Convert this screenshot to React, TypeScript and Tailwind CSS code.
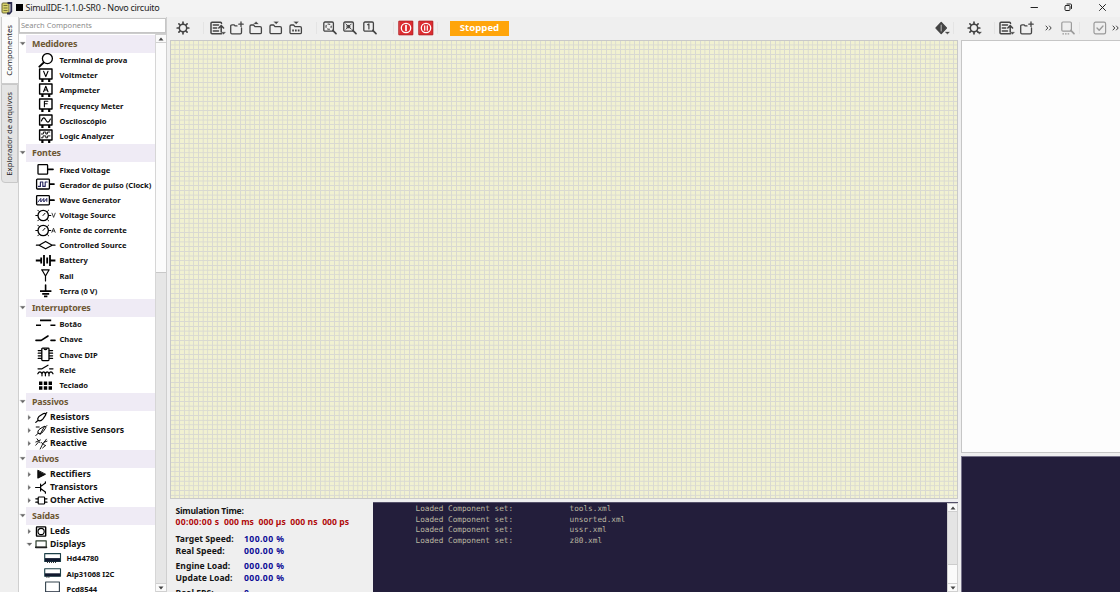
import React from "react";

type IconProps = { children: React.ReactNode; className?: string; w?: number; h?: number };

function Ico({ children, className = "", w = 16, h = 16 }: IconProps) {
  return (
    <svg
      width={w}
      height={h}
      viewBox={`0 0 ${w} ${h}`}
      fill="none"
      stroke="currentColor"
      strokeWidth="1.3"
      strokeLinecap="round"
      strokeLinejoin="round"
      className={`shrink-0 ${className}`}
    >
      {children}
    </svg>
  );
}

/* ---------- component tree icons (22 x 15) ---------- */

const meterBody = (
  <>
    <rect x="4.6" y="1" width="12.4" height="10" strokeWidth="1.4" />
    <path d="M7.4 11v3M14.2 11v3" strokeWidth="2.2" strokeLinecap="butt" />
  </>
);

const knob = (
  <>
    <circle cx="8.2" cy="7.5" r="5.2" strokeWidth="1.3" />
    <path d="M8 7.5l2-2.2M.8 7.5h1.8M13.8 7.5h2M2.8 2.2l1 1M13.6 2.2l-1 1M2.8 12.8l1-1M13.6 12.8l-1-1" strokeWidth="1" />
  </>
);

const icons: Record<string, React.ReactNode> = {
  probe: (
    <>
      <circle cx="12.4" cy="5.6" r="5" strokeWidth="1.3" />
      <path d="M8.6 9.6L4.4 13.6" strokeWidth="2" />
    </>
  ),
  volt: <>{meterBody}<path d="M8.6 3.2l2.2 5.4L13 3.2" strokeWidth="1.1" /></>,
  amp: <>{meterBody}<path d="M8.6 8.8l2.2-5.6L13 8.8M9.6 7h2.6" strokeWidth="1.1" /></>,
  freq: <>{meterBody}<path d="M9.4 8.8V3.2h3.4M9.4 5.8h2.8" strokeWidth="1.1" /></>,
  scope: <>{meterBody}<path d="M6.4 7c1.4-4 3-4 4.4-1s3 3 4.6-1" strokeWidth="1.1" /></>,
  logic: <>{meterBody}<path d="M6.4 5h2V3h2.4v2h1.6V3h2.4M6.4 8.8h1.6V6.9h2.8v1.9h1.8V6.9h2.4" strokeWidth="0.9" /></>,
  fixed: <><rect x="3" y="2.6" width="9.6" height="9.6" rx="0.8" /><path d="M13 7.3h5" strokeWidth="1.7" /></>,
  clock: <><rect x="1.6" y="2.2" width="12.8" height="9.8" rx="0.8" /><path d="M15 7.1h4" strokeWidth="1.7" /><path d="M3.4 9.4h2V5h2.4v4.4h2.4V5h2" stroke="#22225c" strokeWidth="1.1" /></>,
  wave: <><rect x="1.6" y="2.6" width="12.8" height="9.2" rx="0.8" /><path d="M15 7.2h4" strokeWidth="1.7" /><path d="M3 9l2.8-3.6V9l3-3.6V9l3-3.6v3" stroke="#22225c" strokeWidth="1" /></>,
  vsrc: <>{knob}<path d="M17 5.2l1.6 4.2 1.6-4.2" strokeWidth="0.7" /></>,
  asrc: <>{knob}<path d="M16.8 9.4l1.7-4.2 1.7 4.2M17.4 8h2.2" strokeWidth="0.7" /></>,
  ctrl: <path d="M1.4 7.2H4l6.600-3.800 6.600 3.800h2.800M4 7.200l6.600 3.600 6.600-3.600" strokeWidth="1.2" />,
  batt: <path d="M.8 7.5h5M15.4 7.5h5M6.2 4.6v5.8M9 2v11M12.2 4.6v5.8M15 2v11" strokeWidth="1.8" strokeLinecap="butt" />,
  rail: <path d="M6.6 1.8h7.6M7 2l3.5 6L14 2M10.5 8v5" strokeWidth="1.2" />,
  gnd: <><path d="M10.600 1v6" strokeWidth="1.6" /><path d="M5 7.2h11.4M7.2 9.8h7M9 12.4h3.4" strokeWidth="1.7" strokeLinecap="butt" /></>,
  button: <path d="M5 3.4h11.2M1 8.2h5M15.4 8.2h5" strokeWidth="1.6" strokeLinecap="butt" />,
  sw: <path d="M1 8.4h5.2L13 4M16 8.4h4" strokeWidth="1.6" />,
  dip: (
    <>
      <rect x="6.8" y="1.2" width="7.2" height="12.4" rx="0.8" />
      <path d="M3.2 3.6h3.2M3.2 6.2h3.2M3.2 8.8h3.2M3.2 11.4h3.2M14.4 3.6h3.2M14.4 6.2h3.2M14.4 8.8h3.2M14.4 11.4h3.2M9 1.8c.6 1.2 2.4 1.2 3 0" strokeWidth="1.2" />
    </>
  ),
  relay: <path d="M3 5.8h4L13 2.2M14.6 5.8H18M2.8 10.8c1.2-2.6 3-2.6 4.2 0M7 10.8c.8-2.6 2.4-2.6 3.4 0M10.4 10.8c1-2.6 2.6-2.6 3.6 0M14 10.8c1-2.6 2.8-2.6 4 0M7 10.8v2M10.4 10.8v2M14 10.8v2" strokeWidth="1.2" />,
  keypad: <path d="M4 5.2h3.4M8.8 5.2h3.4M13.6 5.2H17M4 10h3.4M8.8 10h3.4M13.6 10H17" strokeWidth="3.4" strokeLinecap="butt" />,
  lcd: (
    <>
      <rect x="1.7" y="2.6" width="15.8" height="7.8" strokeWidth="1.1" fill="#fff" stroke="#1d4048" />
      <path d="M2 8.8h15" stroke="#10182e" strokeWidth="3.4" strokeLinecap="butt" />
      <path d="M4 11.4h9" stroke="#222" strokeWidth="1" strokeDasharray="1 1" strokeLinecap="butt" />
    </>
  ),
  lcd2: (
    <>
      <rect x="1.7" y="2.8" width="15.8" height="7.4" strokeWidth="1.1" fill="#fff" stroke="#1d4048" />
      <path d="M2 8.8h15" stroke="#10182e" strokeWidth="3" strokeLinecap="butt" />
      <path d="M3.4 11.2h4" stroke="#222" strokeWidth="1" strokeDasharray="1 1" strokeLinecap="butt" />
    </>
  ),
  pcd: (
    <>
      <rect x="2.6" y="1" width="13.8" height="10" strokeWidth="1.1" stroke="#33424d" />
      <path d="M3 11.2h13" strokeWidth="1.4" stroke="#10182e" />
    </>
  ),
  /* 13 x 13 group icons */
  resistor: <path d="M.8 11.4l2.4-2.2M3.2 9.2c-1.2-1.2.2-3.4 1.8-4.4l3.6-2.2c1.8-.8 2.8.4 1.8 1.8L8 7.8c-1.4 1.6-3.6 2.4-4.8 1.4zM10.4 3l1.4-1.4" strokeWidth="1.2" />,
  sensor: <path d="M.8 11.6l2.4-2.4M3.2 9.2c-1.2-1.2.2-3.4 1.8-4.4l3.6-2.2c1.8-.8 2.8.4 1.8 1.8L8 7.8c-1.4 1.6-3.6 2.4-4.8 1.4zM1.2 3h3M10.4 3l1.4-1.4M5 10.6l4.4-8" strokeWidth="1" />,
  reactive: <path d="M.8 5l4.6-2M2 1.8l3 4M.8 8.2l2.6-3M5.2 12l2.2-4.4M7.6 7.2l3.8-5M6.4 5.6l3.6 2.8M7.6 11l3-2.6M9 5.2l3-1" strokeWidth="0.9" />,
  diode: <path d="M2.8 2.6v7.6l7.4-3.8z" fill="#111" strokeWidth="0.9" />,
  transistor: <path d="M.6 6.5h4.800M5.6 3v7M5.6 5.6L10 2.2h.4M5.600 7.600l4.400 3.200h.4M10.400 2.200V.8M10.400 10.800v1.400" strokeWidth="1.2" />,
  chip: <><rect x="3.2" y="3" width="6.4" height="7" rx="0.8" strokeWidth="1.2" /><path d="M.8 4.8h2.200M.8 8.200h2.200M9.800 4.800H12M9.800 8.200H12" strokeWidth="1.2" /></>,
  led: <><rect x="1.5" y="1.9" width="9.2" height="9.2" rx=".5" strokeWidth="1.4" /><circle cx="6.1" cy="6.5" r="3.1" strokeWidth="1.1" /></>,
  display: <><rect x="1" y="2.8" width="10.2" height="6.6" stroke="#2f3f2f" strokeWidth="1.2" /><path d="M.8 9.3h10.600" strokeWidth="1.800" stroke="#222" /></>,
};

/* ---------- component tree ---------- */

function Header({ label }: { label: string }) {
  return (
    <div className="flex h-[18.4px] shrink-0 items-center">
      <Ico w={7} h={6} className="text-[#666]">
        <path d="M1.2 1.2h5L3.7 4z" fill="currentColor" strokeWidth=".2" />
      </Ico>
      <div className="flex h-full flex-1 items-center bg-[#efebf5] pt-px pl-[6px] text-[8.9px] font-bold tracking-[-0.15px] text-[#6d5733]">{label}</div>
    </div>
  );
}

function Item({ icon, label, deep = false }: { icon: string; label: string; deep?: boolean }) {
  return (
    <div className={`flex h-[15.17px] shrink-0 items-center ${deep ? "pl-[24px]" : "pl-[16px]"}`}>
      <Ico w={22} h={15}>{icons[icon]}</Ico>
      <span className={`pt-px text-[7.6px] font-bold tracking-[-0.02px] text-[#111] ${deep ? "pl-[1.5px]" : "pl-[2.5px]"}`}>{label}</span>
    </div>
  );
}

function Group({ icon, label, open = false }: { icon: string; label: string; open?: boolean }) {
  return (
    <div className="flex h-[12.9px] shrink-0 items-center pl-[7px]">
      <Ico w={7} h={7} className="text-[#666]">
        {open ? (
          <path d="M1 2h5L3.500 4.800z" fill="currentColor" strokeWidth=".2" />
        ) : (
          <path d="M2.200 1.200v4.600l2.400-2.300z" fill="currentColor" strokeWidth=".2" />
        )}
      </Ico>
      <Ico w={13} h={13} className="ml-[2px]">{icons[icon]}</Ico>
      <span className="pl-[2px] text-[8.65px] font-bold text-[#111]">{label}</span>
    </div>
  );
}

function ScrollArrow({ down = false }: { down?: boolean }) {
  return (
    <div className="flex h-[9px] shrink-0 items-center justify-center border-y border-[#d0d0d0] bg-[#fafafa]">
      <svg width="6" height="4" viewBox="0 0 6 4" fill="#444">
        <path d={down ? "M.5.500h5L3 3.500z" : "M.5 3.500h5L3 .5z"} />
      </svg>
    </div>
  );
}

function Tree() {
  return (
    <div className="flex min-h-0 flex-1 border-t border-[#ccc] bg-white">
      <div className="flex min-w-0 flex-1 flex-col overflow-hidden pt-[0.5px] whitespace-nowrap">
        <Header label="Medidores" />
        <Item icon="probe" label="Terminal de prova" />
        <Item icon="volt" label="Voltmeter" />
        <Item icon="amp" label="Ampmeter" />
        <Item icon="freq" label="Frequency Meter" />
        <Item icon="scope" label="Osciloscópio" />
        <Item icon="logic" label="Logic Analyzer" />
        <Header label="Fontes" />
        <Item icon="fixed" label="Fixed Voltage" />
        <Item icon="clock" label="Gerador de pulso (Clock)" />
        <Item icon="wave" label="Wave Generator" />
        <Item icon="vsrc" label="Voltage Source" />
        <Item icon="asrc" label="Fonte de corrente" />
        <Item icon="ctrl" label="Controlled Source" />
        <Item icon="batt" label="Battery" />
        <Item icon="rail" label="Rail" />
        <Item icon="gnd" label="Terra (0 V)" />
        <Header label="Interruptores" />
        <Item icon="button" label="Botão" />
        <Item icon="sw" label="Chave" />
        <Item icon="dip" label="Chave DIP" />
        <Item icon="relay" label="Relé" />
        <Item icon="keypad" label="Teclado" />
        <Header label="Passivos" />
        <Group icon="resistor" label="Resistors" />
        <Group icon="sensor" label="Resistive Sensors" />
        <Group icon="reactive" label="Reactive" />
        <Header label="Ativos" />
        <Group icon="diode" label="Rectifiers" />
        <Group icon="transistor" label="Transistors" />
        <Group icon="chip" label="Other Active" />
        <Header label="Saídas" />
        <Group icon="led" label="Leds" />
        <Group icon="display" label="Displays" open />
        <Item icon="lcd" label="Hd44780" deep />
        <Item icon="lcd2" label="Aip31068 I2C" deep />
        <Item icon="pcd" label="Pcd8544" deep />
      </div>
      <div className="flex w-[11px] shrink-0 flex-col border-l border-[#d6d6d6] bg-[#e6e6e6]">
        <ScrollArrow />
        <div className="h-[230px] border-b border-[#c8c8c8] bg-[#fbfbfb]" />
        <div className="flex-1" />
        <ScrollArrow down />
      </div>
    </div>
  );
}

/* ---------- toolbar ---------- */

const Cell = ({ children, className = "" }: { children: React.ReactNode; className?: string }) => (
  <div className={`flex h-4 w-5 shrink-0 items-center justify-center ${className}`}>{children}</div>
);

const Sep = ({ className = "" }: { className?: string }) => <div className={`h-3 w-px shrink-0 bg-[#e4e4e4] ${className}`} />;

const Gear = ({ menu = false }: { menu?: boolean }) => (
  <Ico>
    <circle cx="8" cy="8" r="3.7" strokeWidth="1.5" />
    <path d="M8 2.2v1.6M8 12.2v1.6M2.2 8h1.6M12.2 8h1.6M3.9 3.9l1.1 1.1M11 11l1.1 1.1M3.9 12.1L5 11M11 5l1.1-1.1" strokeWidth="1.7" />
    {menu && <path d="M11.5 12h4l-2 2z" fill="currentColor" strokeWidth=".3" />}
  </Ico>
);

const ListIcon = () => (
  <Ico w={17}>
    <path d="M12.5 3.6V3.2c0-.6-.4-1-1-1H3c-.6 0-1 .4-1 1v9.6c0 .6.4 1 1 1h9.5M4.3 5h5.2M4.3 8h3.4M4.3 11h5.2" strokeWidth="1.5" />
    <path d="M12.2 12V5.8M9.8 8l2.4-2.4L14.6 8" strokeWidth="1.5" />
    <path d="M12.5 12.2h4l-2 2z" fill="currentColor" strokeWidth=".3" />
  </Ico>
);

const FolderNew = () => (
  <Ico>
    <path d="M8 5.9H6L5.200 4.900H3c-.8 0-1.300.5-1.300 1.200v6.500c0 .8.500 1.200 1.300 1.200h8.200c.8 0 1.300-.4 1.300-1.200V8" />
    <path d="M12 2v4.4M9.8 4.2h4.4" />
  </Ico>
);

const Folder = ({ kind }: { kind: "up" | "down" | "dots" }) => (
  <Ico>
    <path d="M3.200 5h2.400l1.400 1.600h5c.9 0 1.400.5 1.400 1.300v4.500c0 .8-.5 1.300-1.400 1.300H3.400c-.9 0-1.400-.5-1.400-1.300V6.300C2 5.500 2.400 5 3.200 5z" />
    <path d={kind === "up" ? "M5.800 4h4.600L8.100 1.800z" : "M5.900 1.700h4.600L8.200 3.900z"} fill="currentColor" strokeWidth=".2" />
    {kind === "dots" && <path d="M4.200 10.500h7.400" strokeWidth="1.8" strokeDasharray="1.7 1.1" strokeLinecap="butt" />}
  </Ico>
);

const Zoom = ({ kind }: { kind: "sel" | "fit" | "one" | "find" }) => (
  <Ico className={kind === "find" ? "text-[#9b9b9b]" : ""}>
    <rect x="1.8" y="2" width="9.6" height="9.2" rx="1.2" strokeWidth={kind === "find" ? 1.2 : 1.3} />
    <path d="M10.8 10.4l3.2 3.2" strokeWidth="1.7" />
    {kind === "sel" && <circle cx="6.6" cy="6.6" r="2.6" strokeWidth="1.1" strokeDasharray="2.7 1.38" strokeDashoffset="1.35" strokeLinecap="butt" />}
    {kind === "fit" && (
      <>
        <rect x="5.4" y="5.4" width="2.4" height="2.4" fill="currentColor" strokeWidth="1" />
        <path d="M3.9 4l1 1M9.3 4l-1 1M3.9 9.2l1-1M9.3 9.2l-1-1" strokeWidth="1" />
      </>
    )}
    {kind === "one" && <path d="M5.6 4.7l1.3-.8v5" strokeWidth="1.2" />}
    {kind === "find" && <path d="M2.400 13.800h7" strokeWidth="1.2" strokeDasharray="1.6 1" strokeLinecap="butt" />}
  </Ico>
);

const Power = ({ pause = false }: { pause?: boolean }) => (
  <Ico className="text-white">
    <rect x="1.2" y="1.2" width="13.6" height="13.6" fill="#dc2b30" stroke="#b8171c" strokeWidth="1" />
    <circle cx="8" cy="8" r="4.7" strokeWidth="1.3" />
    <path d={pause ? "M6.7 5.8v4.4M9.3 5.8v4.4" : "M8 5.6v4.8"} strokeWidth={pause ? 1.2 : 1.7} />
  </Ico>
);

const Chevrons = () => (
  <Ico w={8} h={8}>
    <path d="M1 2l1.8 2L1 6M4.400 2l1.800 2-1.800 2" strokeWidth="1" />
  </Ico>
);

function CenterToolbar() {
  return (
    <div className="flex h-[23px] shrink-0 items-center pb-px pl-[3px] text-[#444]">
      <Cell><Gear /></Cell>
      <Sep className="ml-[10px]" />
      <Cell className="ml-[3px]"><ListIcon /></Cell>
      <Cell><FolderNew /></Cell>
      <Cell className="-ml-[1px]"><Folder kind="up" /></Cell>
      <Cell><Folder kind="down" /></Cell>
      <Cell><Folder kind="dots" /></Cell>
      <Sep className="ml-[10px]" />
      <Cell className="ml-[3px]"><Zoom kind="sel" /></Cell>
      <Cell><Zoom kind="fit" /></Cell>
      <Cell><Zoom kind="one" /></Cell>
      <Sep className="ml-[13px]" />
      <Cell className="ml-[2px]"><Power /></Cell>
      <Cell><Power pause /></Cell>
      <Sep className="ml-[1px]" />
      <div className="ml-[12px] flex h-[15px] w-[59px] items-center justify-center bg-[#ffa50a] text-[9.6px] font-bold text-white">Stopped</div>
      <Cell className="mr-[1px] ml-auto">
        <Ico>
          <path d="M7.2 2.4L12.4 8l-5.2 5.600L2 8z" fill="currentColor" />
          <path d="M7.2 5v6" stroke="#aaa" strokeWidth="1.2" />
          <path d="M11.5 12h4l-2 2z" fill="currentColor" strokeWidth=".3" />
        </Ico>
      </Cell>
      <Sep className="mr-[4px]" />
    </div>
  );
}

function EditorToolbar() {
  return (
    <div className="flex h-[23px] shrink-0 items-center pb-px pl-[2.5px] text-[#444]">
      <Cell><Gear menu /></Cell>
      <Sep className="ml-[10px]" />
      <Cell className="ml-[2px]"><ListIcon /></Cell>
      <Cell><FolderNew /></Cell>
      <Cell className="ml-[2px]"><Chevrons /></Cell>
      <Cell className="-ml-[1px]"><Zoom kind="find" /></Cell>
      <Sep className="ml-[1px]" />
      <Cell className="ml-[10px]">
        <Ico className="text-[#999]">
          <rect x="2" y="2.2" width="11.6" height="11.6" rx="1.6" strokeWidth="1.2" />
          <path d="M5 8l2.2 2.3L11 6" strokeWidth="1.3" />
        </Ico>
      </Cell>
      <Cell className="-ml-[4px]"><Chevrons /></Cell>
    </div>
  );
}

/* ---------- lower panels ---------- */

function Stat({ label, value, className = "" }: { label: string; value: string; className?: string }) {
  return (
    <div className={`flex h-[11.7px] items-center ${className}`}>
      <span className="w-[68.5px] tracking-[0.02px]">{label}</span>
      <span className="tracking-[0.42px] text-[#0a0a96]">{value}</span>
    </div>
  );
}

function SimInfo() {
  return (
    <div className="w-[203px] shrink-0 overflow-hidden pt-[3px] pl-[5.5px] text-[8.6px] font-bold whitespace-nowrap text-[#151515]">
      <div className="flex h-[11.7px] items-center tracking-[-0.24px]">Simulation Time:</div>
      <div className="flex h-[11.7px] items-center gap-[4.6px] tracking-[0.05px] text-[#b00a0a]">
        <span className="tracking-[0.3px]">00:00:00 s</span>
        <span>000 ms</span>
        <span>000 µs</span>
        <span>000 ns</span>
        <span>000 ps</span>
      </div>
      <Stat label="Target Speed:" value="100.00 %" className="mt-[5px]" />
      <Stat label="Real Speed:" value="000.00 %" />
      <Stat label="Engine Load:" value="000.00 %" className="mt-[4px]" />
      <Stat label="Update Load:" value="000.00 %" />
      <Stat label="Real FPS:" value="0" className="mt-[3px]" />
    </div>
  );
}

function Console() {
  const files = ["tools.xml", "unsorted.xml", "ussr.xml", "z80.xml"];
  return (
    <div className="flex min-w-0 flex-1 border-t border-[#55516a]">
      <div className="flex-1 bg-[#231e3b] pt-px pl-[42.5px] font-['DejaVu_Sans_Mono',monospace] text-[7.72px] text-[#b9b5a0]">
        {files.map((f) => (
          <div key={f} className="flex h-[10.4px] items-center">
            <span className="w-[154px]">Loaded Component set:</span>
            <span>{f}</span>
          </div>
        ))}
      </div>
      <div className="flex w-[11px] shrink-0 flex-col border-x border-[#d0d0d0] bg-[#e4e4e4]">
        <ScrollArrow />
        <div className="flex-1" />
        <div className="h-[19px] border-t border-[#ccc] bg-[#fafafa]" />
        <ScrollArrow down />
      </div>
    </div>
  );
}

export default function App() {
  return (
    <div className="flex h-[592px] w-[1120px] flex-col overflow-hidden bg-[#efefef] font-['Noto_Sans',sans-serif] leading-none">
      <div className="flex h-[17px] shrink-0 items-center bg-[#f3f3f3] pb-[2px]">
        <svg width="13" height="14" viewBox="0 0 13 14" className="ml-px shrink-0">
          <rect x="1" y="2" width="7" height="10" rx="1" fill="#d9d36a" stroke="#6a6733" />
          <path d="M2.5 4.5h4M2.5 7h4M2.5 9.5h4" stroke="#77733a" />
          <path d="M6.5 2h3.8v8.5L8.5 12.5H6" fill="none" stroke="#2b2b50" strokeWidth="1.8" />
        </svg>
        <div className="ml-[2px] size-[7px] bg-black" />
        <span className="ml-[2.5px] text-[9px] tracking-[-0.27px] text-[#222]">SimulIDE-1.1.0-SR0 - Novo circuito</span>
        <div className="mr-[13.5px] ml-auto flex items-center gap-[25px] text-[#222]">
          <Ico w={9} h={9}><path d="M1 4.5h6.5" strokeWidth="1" /></Ico>
          <Ico w={9} h={9}>
            <rect x="1" y="2.5" width="5" height="5" rx="1" strokeWidth="1" />
            <path d="M3 1h3.5c.8 0 1 .4 1 1v3.5" strokeWidth="1" />
          </Ico>
          <Ico w={9} h={9}><path d="M1.5 1.5l6 6M7.5 1.5l-6 6" strokeWidth="1" /></Ico>
        </div>
      </div>

      <div className="flex min-h-0 flex-1">
        <div className="flex w-[18px] shrink-0 flex-col text-[7.7px] text-[#222]">
          <div className="ml-px flex h-[67px] items-center justify-center border-b border-l border-[#ccc] bg-[#fbfbfb]">
            <span className="rotate-180 [writing-mode:vertical-rl]">Componentes</span>
          </div>
          <div className="ml-px flex h-[99px] items-center justify-center rounded-bl border border-[#c8c8c8] bg-[#e4e4e4]">
            <span className="rotate-180 [writing-mode:vertical-rl]">Explorador de arquivos</span>
          </div>
        </div>

        <div className="flex w-[149px] shrink-0 flex-col border-r border-l border-[#cfcfcf]">
          <div className="mt-px flex h-[15px] shrink-0 items-center border border-[#c6c6c6] bg-white pl-px text-[7.5px] text-[#8c8c8c]">Search Components</div>
          <Tree />
        </div>

        <div className="flex w-[791px] shrink-0 flex-col pl-[3px]">
          <CenterToolbar />
          <div className="h-[459px] shrink-0 border border-[#c9c9c9] bg-[#f1f1d1] bg-[repeating-linear-gradient(90deg,transparent_0_3.2px,#d9d9d2_3.8px_4.2px,transparent_4.69px),repeating-linear-gradient(180deg,transparent_0_3.2px,#d9d9d2_3.8px_4.2px,transparent_4.69px)]" />
          <div className="flex min-h-0 flex-1 pt-[3px]">
            <SimInfo />
            <Console />
          </div>
        </div>

        <div className="flex min-w-0 flex-1 flex-col pl-[3px]">
          <EditorToolbar />
          <div className="h-[413px] shrink-0 border border-r-0 border-[#c6c6c6] bg-[#fdfdfd]" />
          <div className="mt-[3px] flex-1 border-t border-l border-[#77738a] bg-[#231e3b]" />
        </div>
      </div>
    </div>
  );
}
